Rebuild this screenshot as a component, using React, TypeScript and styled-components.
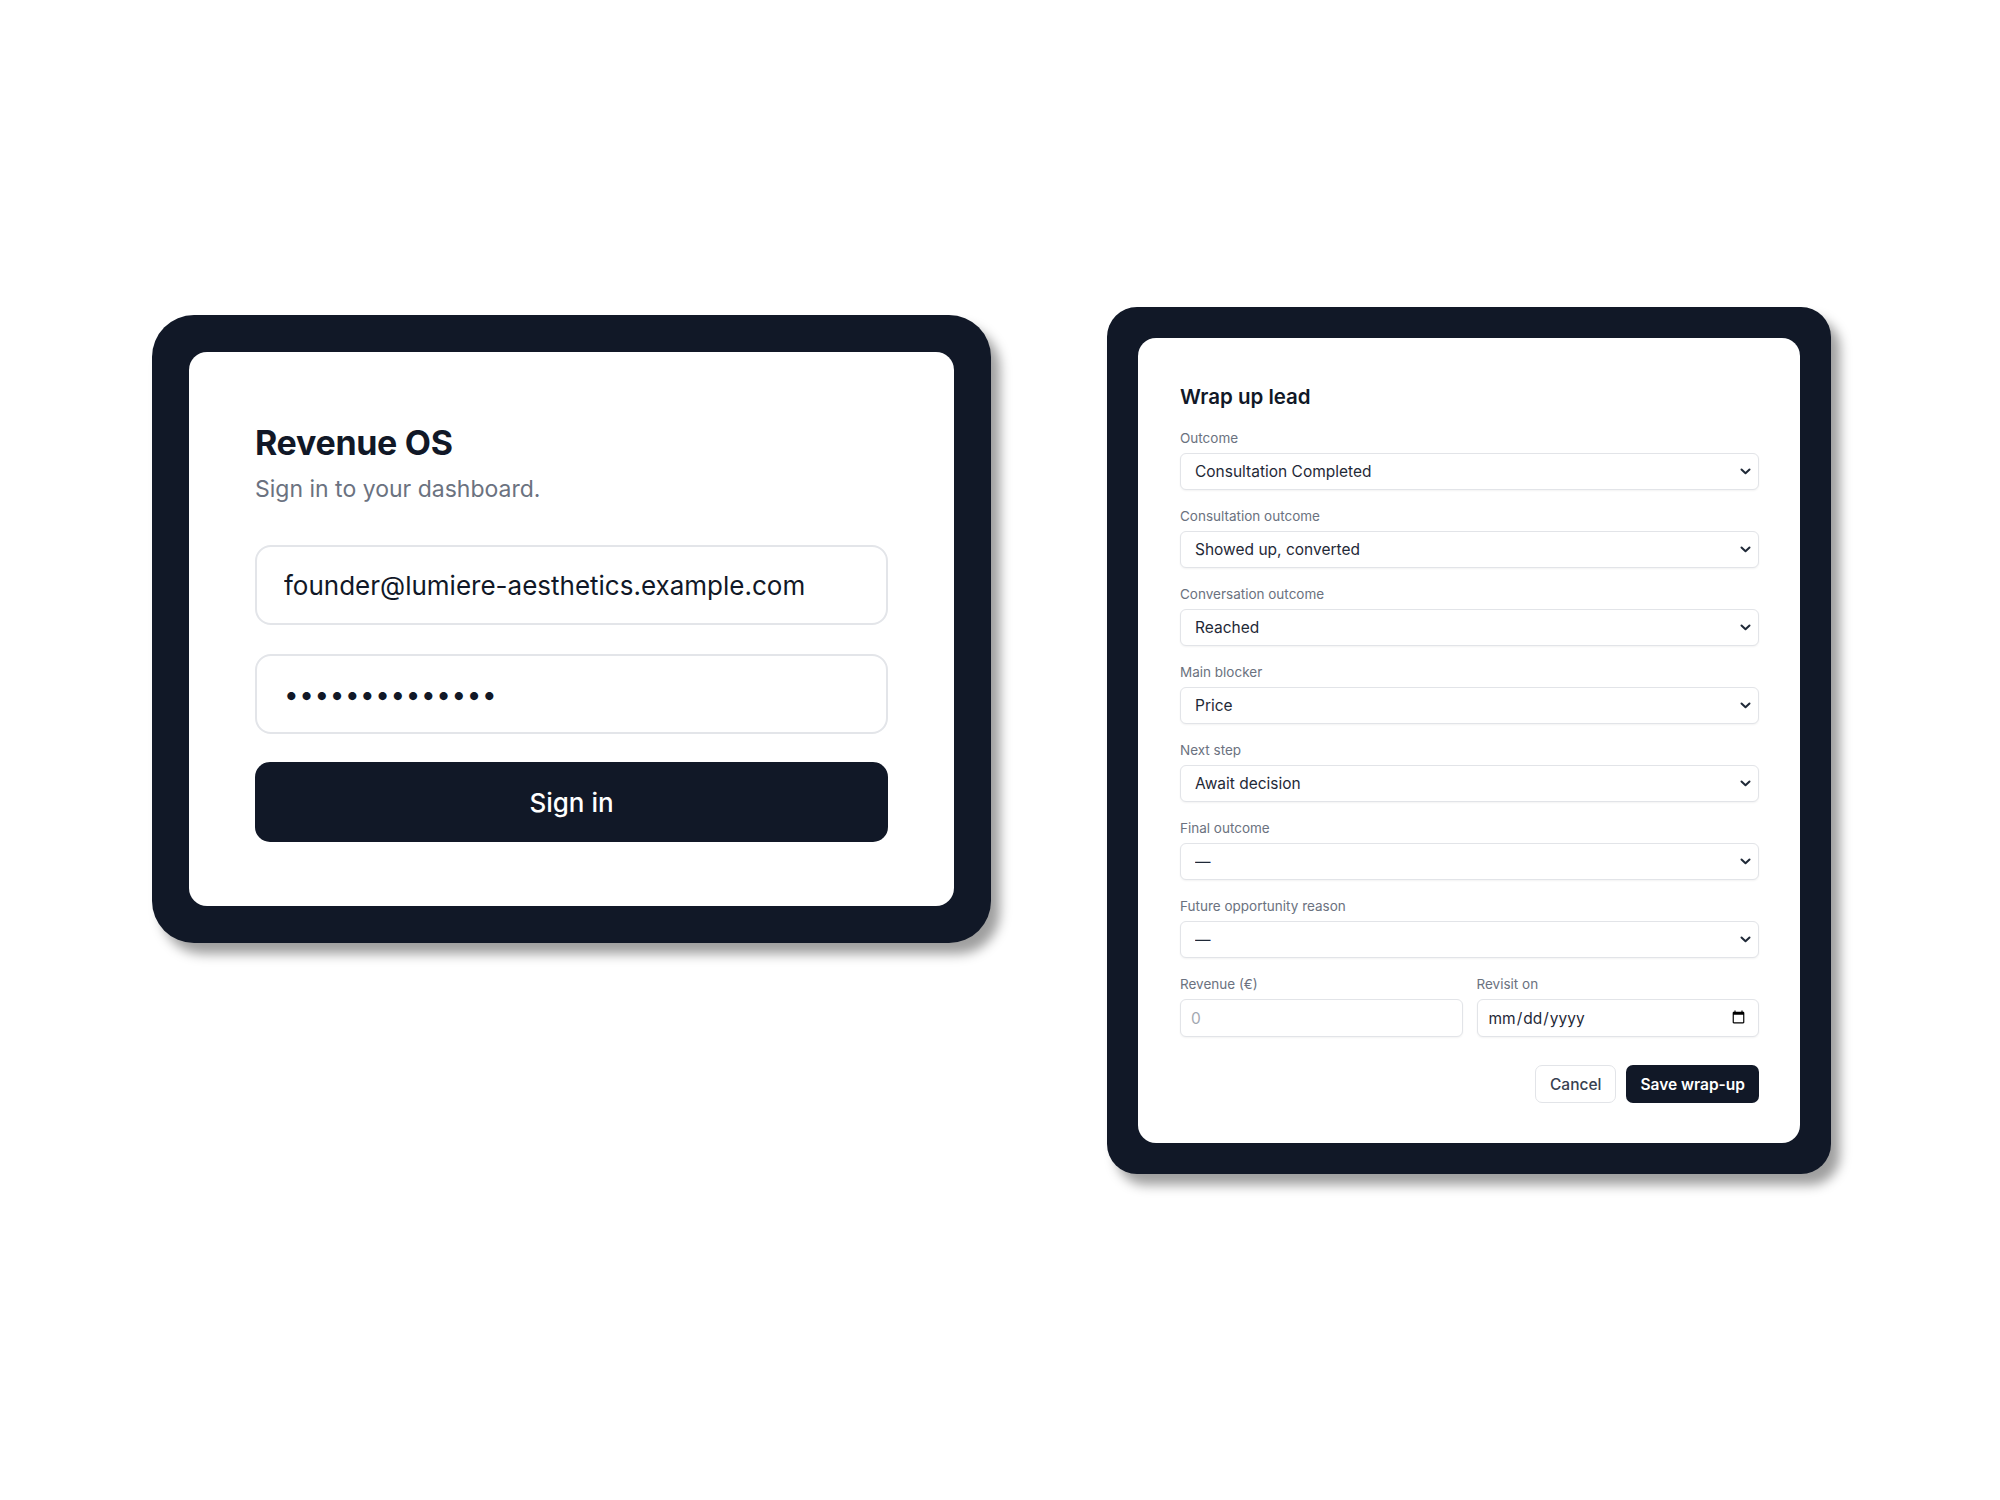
import React from "react";
import styled, { createGlobalStyle } from "styled-components";

const GlobalStyle = createGlobalStyle`
  html, body {
    margin: 0;
    padding: 0;
    background: #ffffff;
  }

  body {
    font-family: Inter, "Noto Sans", "Liberation Sans", sans-serif;
    color: #111827;
  }

  * {
    box-sizing: border-box;
  }
`;

const DARK = "#111827";

const outcomeFields = [
  { label: "Outcome", value: "Consultation Completed" },
  { label: "Consultation outcome", value: "Showed up, converted" },
  { label: "Conversation outcome", value: "Reached" },
  { label: "Main blocker", value: "Price" },
  { label: "Next step", value: "Await decision" },
  { label: "Final outcome", value: "—" },
  { label: "Future opportunity reason", value: "—" },
];

const Chevron = () => (
  <ChevronIcon width="11" height="7" viewBox="0 0 11 7" fill="none">
    <path
      d="M1.5 1.5L5.5 5.3L9.5 1.5"
      stroke="#1f2937"
      strokeWidth="2"
      strokeLinecap="round"
      strokeLinejoin="round"
    />
  </ChevronIcon>
);

const SignInCard = () => {
  return (
    <Frame $size="large">
      <LoginPanel>
        <Title>Revenue OS</Title>
        <Subtitle>Sign in to your dashboard.</Subtitle>
        <LoginInput
          type="email"
          defaultValue="founder@lumiere-aesthetics.example.com"
        />
        <LoginInput type="password" defaultValue="supersecret123" />
        <PrimaryButton type="button">Sign in</PrimaryButton>
      </LoginPanel>
    </Frame>
  );
};

const WrapUpCard = () => {
  return (
    <Frame $size="small">
      <WrapPanel>
        <WrapTitle>Wrap up lead</WrapTitle>
        <Fields>
          {outcomeFields.map((field) => (
            <Field key={field.label}>
              <Label>{field.label}</Label>
              <SelectWrap>
                <Select defaultValue={field.value}>
                  <option>{field.value}</option>
                </Select>
                <Chevron />
              </SelectWrap>
            </Field>
          ))}
          <TwoCol>
            <Field>
              <Label>Revenue (€)</Label>
              <TextInput type="number" placeholder="0" />
            </Field>
            <Field>
              <Label>Revisit on</Label>
              <TextInput type="date" />
            </Field>
          </TwoCol>
        </Fields>
        <Actions>
          <GhostButton type="button">Cancel</GhostButton>
          <SaveButton type="button">Save wrap-up</SaveButton>
        </Actions>
      </WrapPanel>
    </Frame>
  );
};

const App = () => {
  return (
    <>
      <GlobalStyle />
      <Stage>
        <SignInCard />
        <WrapUpCard />
      </Stage>
    </>
  );
};

export default App;

const Stage = styled.div`
  display: flex;
  align-items: flex-start;
  gap: 116px;

  width: 2000px;
  height: 1500px;
  padding: 307px 0 0 152px;

  background: #ffffff;
`;

const Frame = styled.div<{ $size: "large" | "small" }>`
  margin-top: ${({ $size }) => ($size === "large" ? "8px" : "0")};
  padding: ${({ $size }) => ($size === "large" ? "37px" : "31px")};

  background: ${DARK};
  border-radius: ${({ $size }) => ($size === "large" ? "42px" : "30px")};
  box-shadow: 9px 11px 12px rgba(0, 0, 0, 0.38);
`;

const LoginPanel = styled.div`
  display: flex;
  flex-direction: column;

  width: 765px;
  height: 554px;
  padding: 70px 66px 64px;

  background: #ffffff;
  border-radius: 18px;
`;

const Title = styled.h1`
  margin: 0;

  font-size: 34px;
  font-weight: 700;
  line-height: 41px;
  letter-spacing: -0.3px;
  color: ${DARK};
`;

const Subtitle = styled.p`
  margin: 11px 0 41px;

  font-size: 23px;
  line-height: 30px;
  color: #6b7280;
`;

const LoginInput = styled.input`
  width: 100%;
  height: 80px;
  margin-bottom: 29px;
  padding: 0 27px;

  font-family: inherit;
  font-size: 26px;
  color: ${DARK};

  background: #ffffff;
  border: 2px solid #e3e5e9;
  border-radius: 16px;
  outline: none;

  &[type="password"] {
    margin-bottom: 28px;
    letter-spacing: 0.6px;
  }
`;

const PrimaryButton = styled.button`
  width: 100%;
  height: 80px;

  font-family: inherit;
  font-size: 26px;
  font-weight: 500;
  color: #ffffff;

  background: ${DARK};
  border: none;
  border-radius: 15px;
  cursor: pointer;
`;

const WrapPanel = styled.div`
  display: flex;
  flex-direction: column;

  width: 662px;
  height: 805px;
  padding: 45px 41px 40px 42px;

  background: #ffffff;
  border-radius: 18px;
`;

const WrapTitle = styled.h2`
  margin: 0 0 18px;

  font-size: 20.5px;
  font-weight: 600;
  line-height: 27px;
  color: ${DARK};
`;

const Fields = styled.div`
  display: flex;
  flex-direction: column;
  gap: 16px;
`;

const Field = styled.div`
  display: flex;
  flex-direction: column;
  gap: 5px;
  min-width: 0;
`;

const Label = styled.label`
  font-size: 13.5px;
  line-height: 20px;
  color: #6b7280;
`;

const SelectWrap = styled.div`
  position: relative;
`;

const Select = styled.select`
  width: 100%;
  height: 37px;
  padding: 0 30px 0 14px;

  font-family: inherit;
  font-size: 15.5px;
  color: #1f2937;

  background: #ffffff;
  border: 1.5px solid #e2e4e8;
  border-radius: 6px;
  box-shadow: 0 1px 2px rgba(0, 0, 0, 0.05);
  appearance: none;
  outline: none;
`;

const ChevronIcon = styled.svg`
  position: absolute;
  top: 15px;
  right: 8px;
  pointer-events: none;
`;

const TwoCol = styled.div`
  display: grid;
  grid-template-columns: 1fr 1fr;
  gap: 14px;
`;

const TextInput = styled.input`
  width: 100%;
  height: 38px;
  padding: 0 10px;

  font-family: inherit;
  font-size: 15.5px;
  color: #1f2937;

  background: #ffffff;
  border: 1.5px solid #e2e4e8;
  border-radius: 6px;
  box-shadow: 0 1px 2px rgba(0, 0, 0, 0.05);
  outline: none;

  &::placeholder {
    color: #a3a8b1;
  }
`;

const Actions = styled.div`
  display: flex;
  justify-content: flex-end;
  gap: 10px;
  margin-top: 28px;
`;

const GhostButton = styled.button`
  height: 38px;
  padding: 0 14px;

  font-family: inherit;
  font-size: 15.5px;
  font-weight: 500;
  color: #374151;

  background: #ffffff;
  border: 1.5px solid #e2e4e8;
  border-radius: 7px;
  cursor: pointer;
`;

const SaveButton = styled.button`
  height: 38px;
  padding: 0 14px;

  font-family: inherit;
  font-size: 15.5px;
  font-weight: 600;
  color: #ffffff;

  background: ${DARK};
  border: none;
  border-radius: 7px;
  cursor: pointer;
`;
